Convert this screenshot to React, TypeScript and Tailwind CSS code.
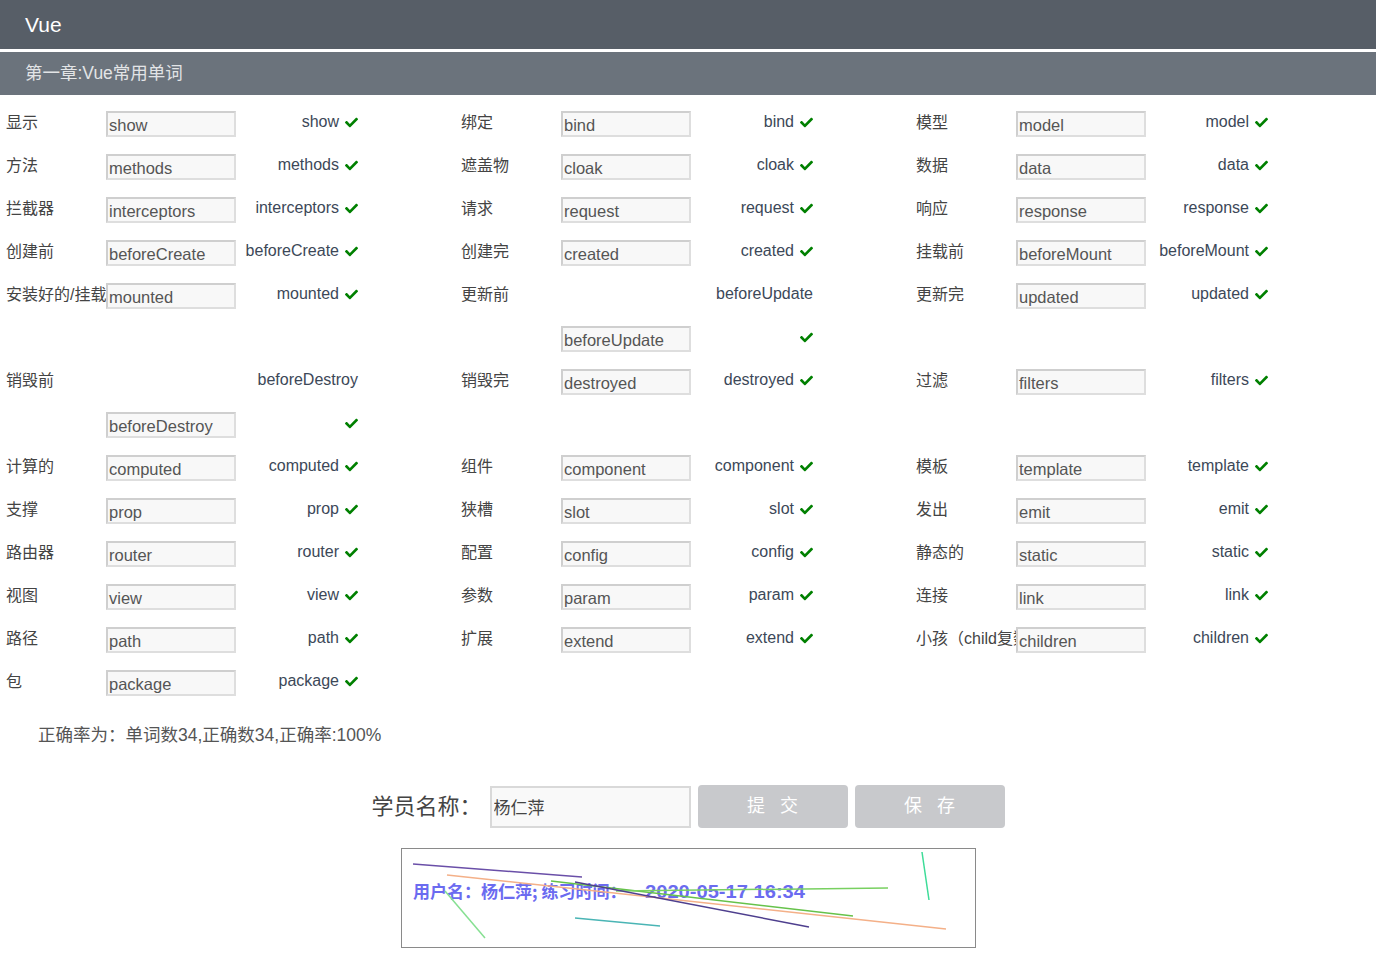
import { FaCheck } from "react-icons/fa";

type Cell =
  | { kind: "full"; label: string; word: string }
  | { kind: "top"; label: string; word: string }
  | { kind: "bottom"; word: string }
  | null;

const full = (label: string, word: string): Cell => ({ kind: "full", label, word });
const top = (label: string, word: string): Cell => ({ kind: "top", label, word });
const bottom = (word: string): Cell => ({ kind: "bottom", word });

const rows: Cell[][] = [
  [full("显示", "show"), full("绑定", "bind"), full("模型", "model")],
  [full("方法", "methods"), full("遮盖物", "cloak"), full("数据", "data")],
  [full("拦截器", "interceptors"), full("请求", "request"), full("响应", "response")],
  [full("创建前", "beforeCreate"), full("创建完", "created"), full("挂载前", "beforeMount")],
  [full("安装好的/挂载", "mounted"), top("更新前", "beforeUpdate"), full("更新完", "updated")],
  [null, bottom("beforeUpdate"), null],
  [top("销毁前", "beforeDestroy"), full("销毁完", "destroyed"), full("过滤", "filters")],
  [bottom("beforeDestroy"), null, null],
  [full("计算的", "computed"), full("组件", "component"), full("模板", "template")],
  [full("支撑", "prop"), full("狭槽", "slot"), full("发出", "emit")],
  [full("路由器", "router"), full("配置", "config"), full("静态的", "static")],
  [full("视图", "view"), full("参数", "param"), full("连接", "link")],
  [full("路径", "path"), full("扩展", "extend"), full("小孩（child复数）", "children")],
  [full("包", "package"), null, null],
];

const font = "font-['Liberation_Sans','Noto_Sans_CJK_SC',sans-serif]";

function WordBox({ value }: { value: string }) {
  return (
    <div className="w-[130px] h-[26px] shrink-0 border-2 border-t-[#cfcfcf] border-l-[#cfcfcf] border-r-[#dedede] border-b-[#dedede] bg-[#f8f8f8] pl-[1px] pt-[2px] text-[16.5px] leading-[20px] text-[#555] whitespace-nowrap overflow-hidden">
      {value}
    </div>
  );
}

function Check() {
  return <FaCheck className="text-[#008000] ml-[6px] shrink-0" size={13} />;
}

function WordCell({ cell }: { cell: Cell }) {
  if (!cell) return <div className="h-[43px]" />;
  return (
    <div className="h-[43px] pl-[6px] flex items-center">
      <div className="w-[100px] shrink-0 whitespace-nowrap overflow-hidden text-[16px] text-[#444] -mt-[2px]">
        {cell.kind === "bottom" ? "" : cell.label}
      </div>
      {cell.kind === "top" ? <div className="w-[130px] shrink-0" /> : <WordBox value={cell.word} />}
      <div className="w-[122px] flex items-center justify-end text-[16px] text-[#3c4858] -mt-[3px]">
        {cell.kind !== "bottom" && <span>{cell.word}</span>}
        {cell.kind !== "top" && <Check />}
      </div>
    </div>
  );
}

function Captcha() {
  const lines = [
    { x1: 11, y1: 15, x2: 180, y2: 28, c: "#6a4fa8" },
    { x1: 45, y1: 26, x2: 544, y2: 80, c: "#f4b088" },
    { x1: 149, y1: 32, x2: 451, y2: 67, c: "#66c24a" },
    { x1: 214, y1: 42, x2: 486, y2: 39, c: "#78d060" },
    { x1: 173, y1: 33, x2: 407, y2: 78, c: "#4e3f8e" },
    { x1: 173, y1: 69, x2: 258, y2: 77, c: "#4ab5b5" },
    { x1: 43, y1: 42, x2: 83, y2: 89, c: "#86e092" },
    { x1: 520, y1: 3, x2: 527, y2: 51, c: "#3ddc98" },
  ];
  return (
    <div className="w-[575px] h-[100px] border border-[#8a8a8a] bg-white">
      <svg width="573" height="98" viewBox="0 0 573 98">
        <g fill="#6b6bf0" fontWeight="bold" fontSize="17" fontFamily="'Noto Sans CJK SC', sans-serif">
          <text x="11" y="49">用户名：杨仁萍; 练习时间：</text>
          <text x="243" y="49" textLength="160" lengthAdjust="spacingAndGlyphs" fontFamily="'Liberation Sans', sans-serif" fontSize="19">
            2020-05-17 16:34
          </text>
        </g>
        {lines.map((l, i) => (
          <line key={i} x1={l.x1} y1={l.y1} x2={l.x2} y2={l.y2} stroke={l.c} strokeWidth="1.5" />
        ))}
      </svg>
    </div>
  );
}

export default function App() {
  return (
    <div className={`${font} w-[1376px] min-h-[977px] bg-white`}>
      <div className="h-[49px] bg-[#575e67] pl-[25px] flex items-center text-[21px] text-white">Vue</div>
      <div className="h-[3px] bg-white" />
      <div className="h-[43px] bg-[#6b737c] pl-[25px] flex items-center text-[17.5px] text-[#e2e4e6]">
        第一章:Vue常用单词
      </div>

      <div className="pt-[7px]">
        {rows.map((row, r) => (
          <div key={r} className="grid grid-cols-[455px_455px_455px]">
            {row.map((cell, c) => (
              <WordCell key={c} cell={cell} />
            ))}
          </div>
        ))}
      </div>

      <div className="pl-[38px] pt-[21px] leading-[20px] text-[17.5px] text-[#555]">
        正确率为：单词数34,正确数34,正确率:100%
      </div>

      <div className="mt-[40px] flex justify-center items-center">
        <span className="text-[22px] text-[#444] mr-[8px]">学员名称：</span>
        <input
          readOnly
          defaultValue="杨仁萍"
          className="w-[201px] h-[42px] border-2 border-[#d9d9d9] bg-[#f9f9f9] pl-[2px] text-[17px] text-[#444] outline-none"
        />
        <button className="ml-[7px] w-[150px] h-[43px] rounded-[4px] bg-[#c8c9cc] text-white text-[18px] tracking-[5px] pl-[5px]">
          提 交
        </button>
        <button className="ml-[7px] w-[150px] h-[43px] rounded-[4px] bg-[#c8c9cc] text-white text-[18px] tracking-[5px] pl-[5px]">
          保 存
        </button>
      </div>

      <div className="mt-[20px] flex justify-center">
        <Captcha />
      </div>
    </div>
  );
}
